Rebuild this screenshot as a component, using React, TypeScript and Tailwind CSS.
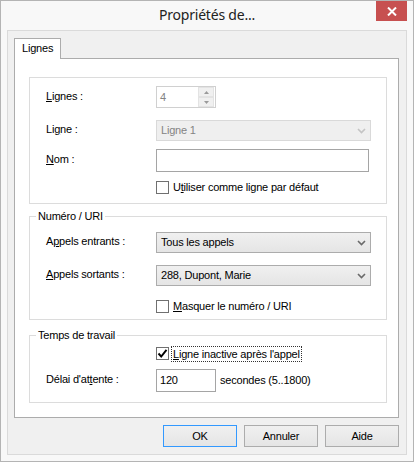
import type { ReactNode } from 'react';

const font = { fontFamily: '"Liberation Sans", Arial, sans-serif' };

function Chevron({ disabled }: { disabled?: boolean }) {
  return (
    <svg width="9" height="6" viewBox="0 0 9 6" className="shrink-0">
      <polyline
        points="1,1 4.5,4.5 8,1"
        fill="none"
        stroke={disabled ? '#c4c4c4' : '#6a6a6a'}
        strokeWidth="1.6"
      />
    </svg>
  );
}

function Combo({ value, disabled }: { value: string; disabled?: boolean }) {
  return (
    <div
      className={
        disabled
          ? 'flex h-[21px] w-[215px] items-center justify-between border border-[#d9d9d9] bg-[#efefef] pl-[4px] pr-[4px] text-[#838383]'
          : 'flex h-[21px] w-[215px] items-center justify-between border border-[#acacac] bg-gradient-to-b from-[#f0f0f0] to-[#e5e5e5] pl-[4px] pr-[4px] text-black'
      }
    >
      <span>{value}</span>
      <Chevron disabled={disabled} />
    </div>
  );
}

function Checkbox({ checked }: { checked?: boolean }) {
  return (
    <div className="flex h-[13px] w-[13px] shrink-0 items-center justify-center border border-[#707070] bg-white">
      {checked && (
        <svg width="11" height="11" viewBox="0 0 11 11">
          <polyline points="1.5,5.5 4.2,8.5 9.5,1.8" fill="none" stroke="#000" strokeWidth="1.9" />
        </svg>
      )}
    </div>
  );
}

function Row({ label, children, className }: { label: ReactNode; children: ReactNode; className: string }) {
  return (
    <div className={'flex items-center ' + className}>
      <div className="w-[110px] shrink-0 pb-[2px]">{label}</div>
      {children}
    </div>
  );
}

function Group({ title, children, className }: { title?: string; children: ReactNode; className: string }) {
  return (
    <div className={'relative border border-[#dcdcdc] pl-[16px] ' + className}>
      {title && (
        <span className="absolute -top-[8px] left-[6px] bg-white px-[2px] leading-[14px]">{title}</span>
      )}
      {children}
    </div>
  );
}

function SpinArrow({ up }: { up?: boolean }) {
  return (
    <div className="flex h-[10px] w-[16px] items-center justify-center border border-[#e3e3e3] bg-[#f0f0f0]">
      <svg width="5" height="3" viewBox="0 0 5 3">
        <polygon points={up ? '0,3 2.5,0 5,3' : '0,0 2.5,3 5,0'} fill="#9a9a9a" />
      </svg>
    </div>
  );
}

function PushButton({ label, isDefault }: { label: string; isDefault?: boolean }) {
  return (
    <div
      className={
        'flex h-[22px] w-[74px] items-center justify-center border bg-gradient-to-b from-[#f0f0f0] to-[#e5e5e5] text-black ' +
        (isDefault ? 'border-[#3399ff]' : 'border-[#acacac]')
      }
    >
      {label}
    </div>
  );
}

export default function App() {
  return (
    <div className="flex h-[462px] w-[414px] flex-col border border-[#b4b4b4] bg-[#f8f8f8]">
      <div className="relative flex h-[29px] shrink-0 items-center justify-center">
        <span
          className="pb-[2px] text-[14px] tracking-[-0.2px] text-[#222]"
          style={{ fontFamily: '"Noto Sans", "Open Sans", sans-serif' }}
        >
          Propriétés de...
        </span>
        <div className="absolute right-[6px] top-0 flex h-[20px] w-[31px] items-center justify-center bg-[#c75050]">
          <svg width="10" height="9" viewBox="0 0 10 9">
            <path d="M1 0.5 L9 8.5 M9 0.5 L1 8.5" stroke="#fff" strokeWidth="2" />
          </svg>
        </div>
      </div>

      <div
        className="mx-[6px] mb-[6px] flex flex-1 flex-col border border-[#dadada] bg-[#f0f0f0] pl-[6px] pr-[7px] pt-[7px] text-[11px] leading-[13px] tracking-[-0.2px] text-black"
        style={font}
      >
        <div className="flex">
          <div className="relative z-10 -mb-px flex h-[21px] w-[47px] items-start border border-b-0 border-[#acacac] bg-white pl-[7px] pt-[3px]">
            Lignes
          </div>
        </div>

        <div className="h-[360px] border border-[#acacac] bg-white pl-[14px] pr-[11px] pt-[18px]">
          <Group className="pb-[9px] pt-[8px]">
            <Row label={<><u>L</u>ignes :</>} className="h-[22px]">
              <div className="flex h-[22px] w-[60px] items-center justify-between border border-[#d0d0d0] bg-white pl-[3px] pr-px">
                <span className="text-[#838383]">4</span>
                <div className="flex flex-col">
                  <SpinArrow up />
                  <SpinArrow />
                </div>
              </div>
            </Row>
            <Row label={<>Li<u>g</u>ne :</>} className="mt-[12px] h-[21px]">
              <Combo value="Ligne 1" disabled />
            </Row>
            <Row label={<><u>N</u>om :</>} className="mt-[8px] h-[23px]">
              <div className="h-[23px] w-[213px] border border-[#a5a5a5] bg-white" />
            </Row>
            <div className="mt-[9px] flex h-[13px] items-center pl-[110px]">
              <Checkbox />
              <span className="ml-[4px]">U<u>t</u>iliser comme ligne par défaut</span>
            </div>
          </Group>

          <Group title="Numéro / URI" className="mt-[12px] pb-[6px] pt-[15px]">
            <Row label={<>A<u>p</u>pels entrants :</>} className="h-[21px]">
              <Combo value="Tous les appels" />
            </Row>
            <Row label={<><u>A</u>ppels sortants :</>} className="mt-[12px] h-[21px]">
              <Combo value="288, Dupont, Marie" />
            </Row>
            <div className="mt-[14px] flex h-[13px] items-center pl-[110px]">
              <Checkbox />
              <span className="ml-[4px]"><u>M</u>asquer le numéro / URI</span>
            </div>
          </Group>

          <Group title="Temps de travail" className="mt-[15px] pb-[10px] pt-[11px]">
            <div className="flex h-[13px] items-center pl-[110px]">
              <Checkbox checked />
              <span className="ml-[2px] border border-dotted border-[#333] px-px leading-[14px]">
                <u>L</u>igne inactive après l'appel
              </span>
            </div>
            <Row label={<>Délai d'at<u>t</u>ente :</>} className="mt-[9px] h-[23px]">
              <div className="flex h-[23px] w-[60px] items-center border border-[#a5a5a5] bg-white pl-[3px]">
                120
              </div>
              <span className="ml-[4px]">secondes (5..1800)</span>
            </Row>
          </Group>
        </div>

        <div className="mt-[7px] flex justify-end gap-[7px]">
          <PushButton label="OK" isDefault />
          <PushButton label="Annuler" />
          <PushButton label="Aide" />
        </div>
      </div>
    </div>
  );
}
